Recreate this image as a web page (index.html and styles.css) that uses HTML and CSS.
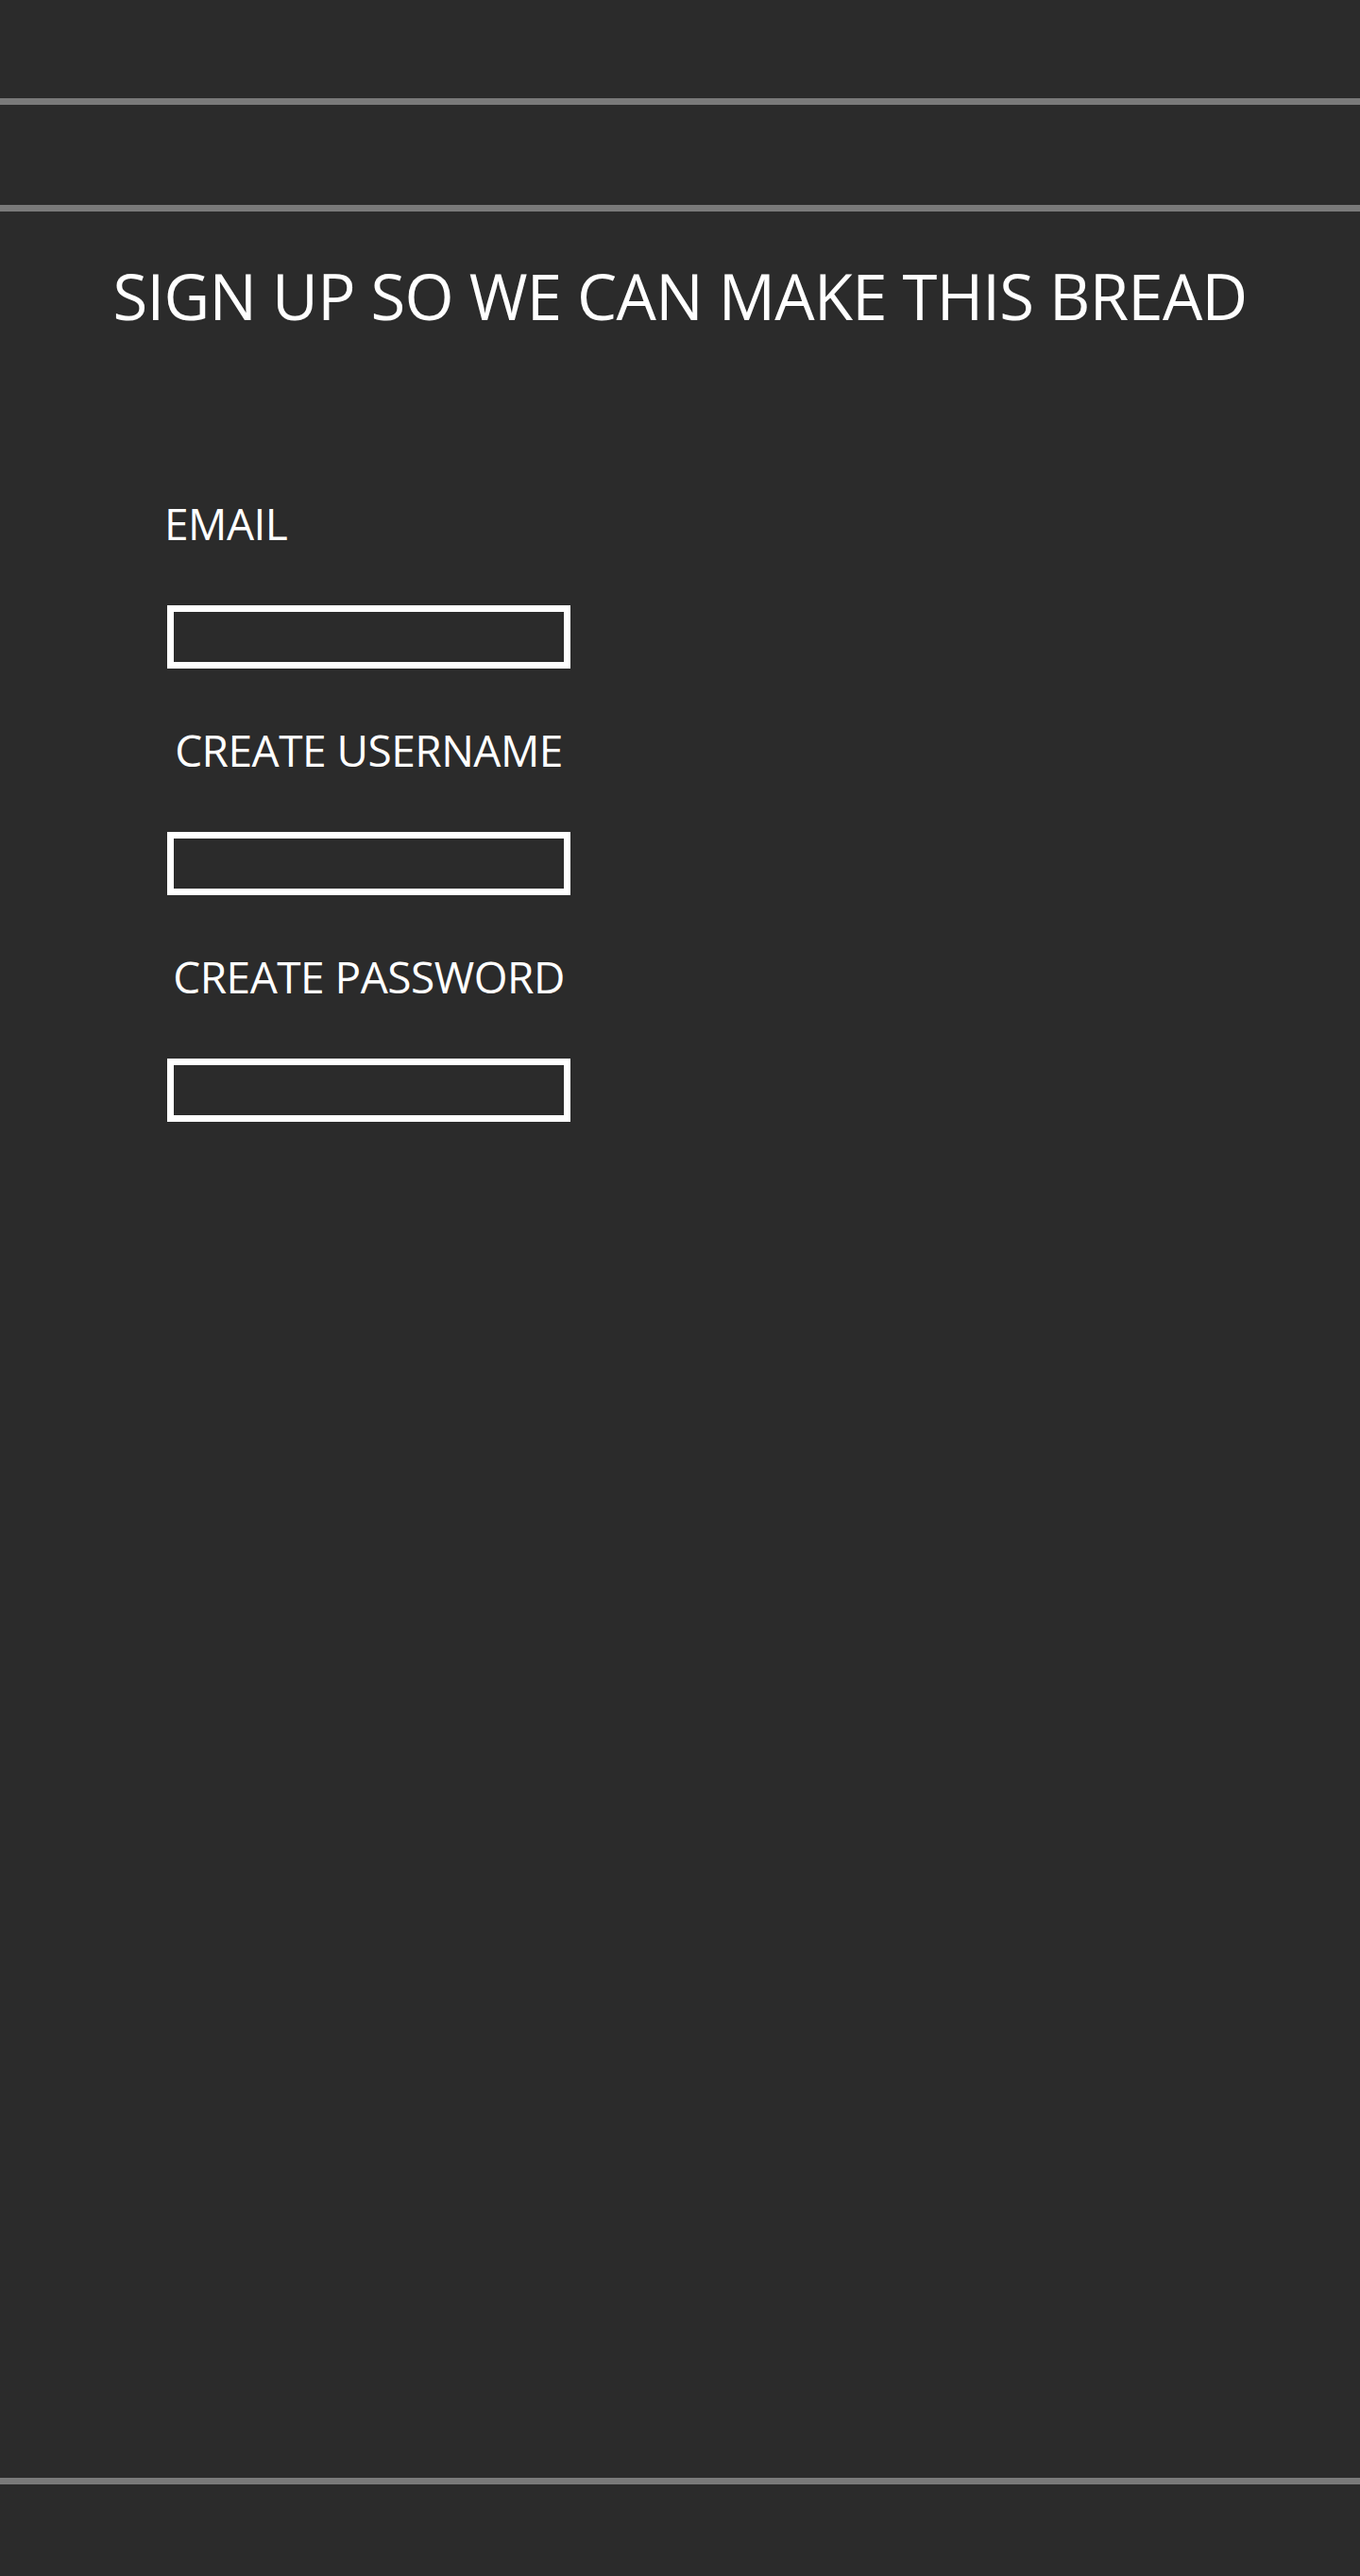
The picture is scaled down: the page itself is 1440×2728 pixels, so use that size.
FILE: index.html
```html
<!DOCTYPE html>
<html lang="en">
<head>
<meta charset="utf-8">
<title>Sign up</title>
<link rel="stylesheet" href="styles.css">
</head>
<body>
<div class="page">
  <header class="top">
    <hr class="rule">
    <div class="nav"></div>
    <hr class="rule">
  </header>
  <main class="main">
    <h1 class="title">SIGN UP SO WE CAN MAKE THIS BREAD</h1>
    <form class="form">
      <div class="field">
        <label class="label label-left" for="email">EMAIL</label>
        <input class="input" id="email" type="email">
      </div>
      <div class="field">
        <label class="label" for="user">CREATE USERNAME</label>
        <input class="input" id="user" type="text">
      </div>
      <div class="field">
        <label class="label" for="pass">CREATE PASSWORD</label>
        <input class="input" id="pass" type="password">
      </div>
    </form>
  </main>
  <footer class="bottom">
    <hr class="rule">
  </footer>
</div>
</body>
</html>
```
FILE: styles.css
```css
* { box-sizing: border-box; }
html, body {
  margin: 0;
  padding: 0;
  background: #2b2b2b;
}
body {
  font-family: "Open Sans", "DejaVu Sans", sans-serif;
  color: #ffffff;
}
.page {
  min-height: 2728px;
  display: flex;
  flex-direction: column;
}
.top {
  padding-top: 104px;
}
.rule {
  margin: 0;
  border: 0;
  height: 7px;
  background: #7a7a7a;
}
.nav {
  height: 106px;
}
.main {
  flex: 1;
  display: flex;
  flex-direction: column;
}
.title {
  margin: 56px 0 0;
  font-size: 67px;
  font-weight: 400;
  letter-spacing: -0.7px;
  line-height: 1;
  text-align: center;
}
.form {
  margin: 184px 0 0 177px;
  width: 427px;
  display: flex;
  flex-direction: column;
  gap: 63px;
}
.field {
  display: flex;
  flex-direction: column;
  gap: 64px;
}
.label {
  font-size: 46px;
  font-weight: 400;
  letter-spacing: -0.5px;
  line-height: 1;
  text-align: center;
}
.label-left {
  text-align: left;
  margin-left: -3px;
}
.input {
  display: block;
  width: 427px;
  height: 67px;
  margin: 0;
  padding: 0;
  border: 7px solid #ffffff;
  background: transparent;
  outline: none;
}
.bottom {
  padding-bottom: 97px;
}
```
